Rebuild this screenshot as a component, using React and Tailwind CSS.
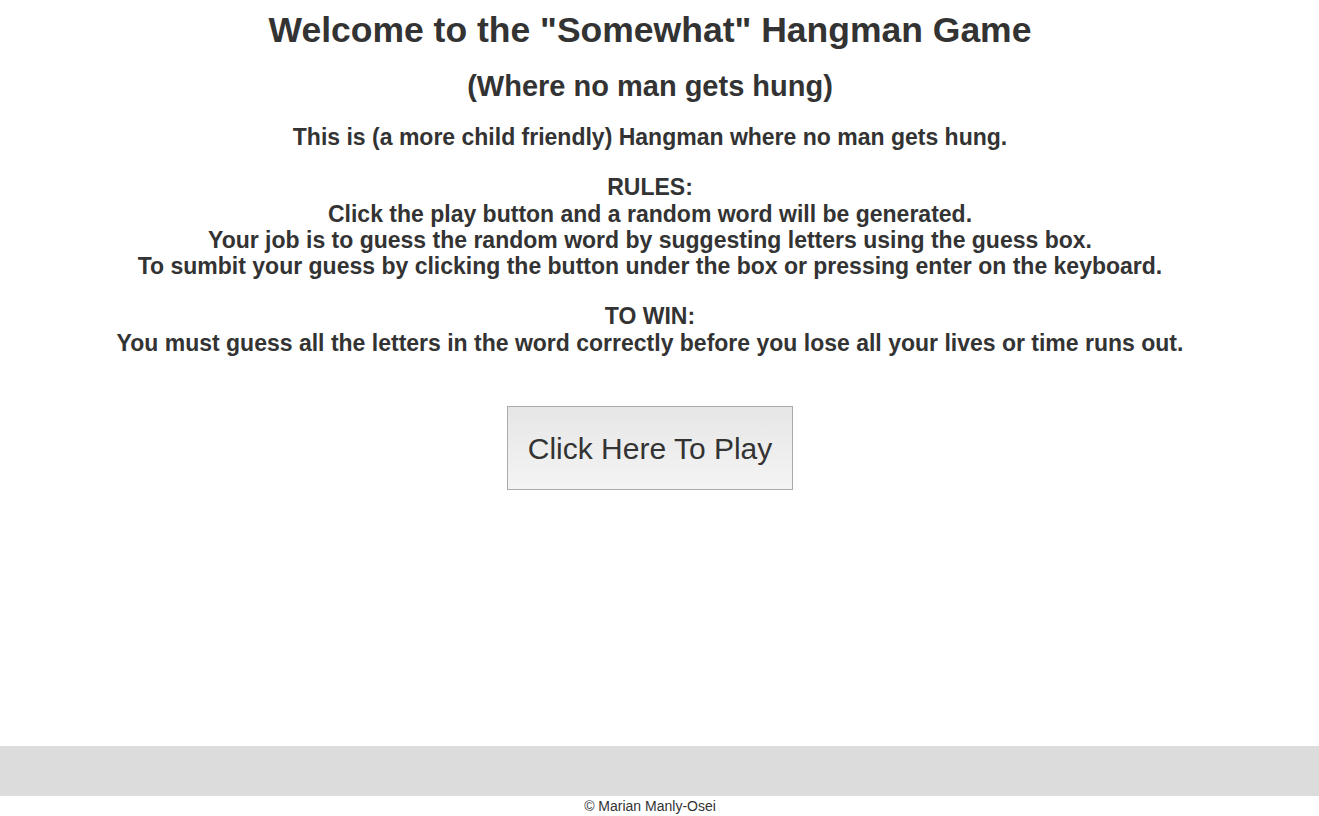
export default function App() {
  return (
    <div className="min-h-[816px] flex flex-col bg-white text-[#333] font-['Liberation_Sans',Arial,sans-serif]">
      <main className="flex-1 flex flex-col items-center text-center pr-[19px]">
        <h1 className="mt-[10px] text-[35.5px] leading-[40px] font-bold">
          Welcome to the "Somewhat" Hangman Game
        </h1>
        <h2 className="mt-[20px] text-[29px] leading-[32px] font-bold">
          (Where no man gets hung)
        </h2>
        <div className="mt-[22px] text-[23px] leading-[26.3px] font-bold">
          <p>This is (a more child friendly) Hangman where no man gets hung.</p>
          <p className="mt-[24px]">RULES:</p>
          <p>Click the play button and a random word will be generated.</p>
          <p>Your job is to guess the random word by suggesting letters using the guess box.</p>
          <p>To sumbit your guess by clicking the button under the box or pressing enter on the keyboard.</p>
          <p className="mt-[24px]">TO WIN:</p>
          <p>You must guess all the letters in the word correctly before you lose all your lives or time runs out.</p>
        </div>
        <button className="mt-[50px] w-[286px] h-[84px] border border-[#aaa] bg-gradient-to-b from-[#e6e6e6] to-[#f4f4f4] text-[30px] text-[#333]">
          Click Here To Play
        </button>
      </main>
      <footer>
        <div className="h-[50px] bg-[#dcdcdc]" />
        <p className="h-[20px] pr-[19px] text-center text-[14px] leading-[20px] text-[#333]">
          © Marian Manly-Osei
        </p>
      </footer>
    </div>
  );
}
